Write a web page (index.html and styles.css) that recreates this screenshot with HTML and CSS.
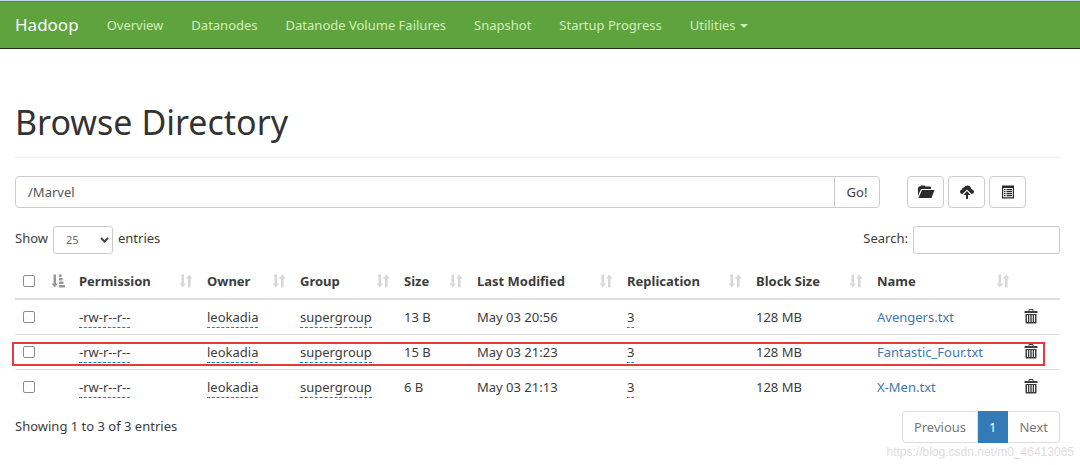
FILE: index.html
```html
<!DOCTYPE html>
<html lang="en">
<head>
<meta charset="utf-8">
<title>Browsing HDFS</title>
<link rel="stylesheet" href="styles.css">
</head>
<body>
<svg class="sprite" aria-hidden="true">
  <symbol id="sort" viewBox="0 0 14 14"><path d="M2.500 .5h2.500v9h2L3.750 13.500 .5 9.500h2zM9 13.500h2.500V4.500h2L10.250 .5 7 4.500h2z"/></symbol>
  <symbol id="sorted" viewBox="0 0 14 14"><path d="M2.500 .5h2.500v9h2L3.750 13.500 .5 9.500h2zM8 .5h2.500v2.500H8zM8 4h3.500v2.500H8zM8 7.500h4.500V10H8zM8 11h6v2.500H8z"/></symbol>
  <symbol id="trash" viewBox="0 0 14 16"><path fill-rule="evenodd" d="M4.500 2V1q0-1 1-1h3q1 0 1 1v1H13q.5 0 .5.500V4H.5V2.500Q.5 2 1 2zM5.500 2h3V1h-3zM1.500 5h11v8.500q0 1-1 1h-9q-1 0-1-1zM3 6v7h1V6zm2.300 0v7h1V6zm2.400 0v7h1V6zM10 6v7h1V6z"/></symbol>
</svg>
<nav class="navbar">
  <a class="brand" href="#">Hadoop</a>
  <a href="#">Overview</a>
  <a href="#">Datanodes</a>
  <a href="#">Datanode Volume Failures</a>
  <a href="#">Snapshot</a>
  <a href="#">Startup Progress</a>
  <a href="#">Utilities <span class="caret"></span></a>
</nav>
<main class="container">
  <header class="page-header"><h1>Browse Directory</h1></header>
  <div class="toolbar">
    <form class="path-group">
      <input type="text" class="path" aria-label="Directory" value="/Marvel">
      <button type="button" class="go">Go!</button>
    </form>
    <div class="actions">
      <button type="button" aria-label="Create directory"><svg width="18" height="14" viewBox="0 0 18 14"><path d="M1 11V2.500L2 1.500h1L4 .5h3.500l1 1H13q1 0 1 1V4H5L3.500 5z"/><path d="M5 5h12.500L14.500 13H1.500z"/></svg></button>
      <button type="button" aria-label="Upload files"><svg width="16" height="14" viewBox="0 0 16 14"><path d="M3.500 9Q1 9 1 6.800 1 5 3 4.500 3 2.500 5 2.500 6 .5 8.500.5q3.200 0 3.700 3.500Q15 4.500 15 6.700 15 9 12.500 9L8 4.500 3.500 9z"/><path d="M8 6l3.500 4H9v4H7v-4H4.500z"/></svg></button>
      <button type="button" aria-label="Cut and paste"><svg width="14" height="14" viewBox="0 0 14 14"><path fill-rule="evenodd" d="M1 .5h12v13H1zM2.200 3v9.300h9.600V3zM3 4h1.500v1.200H3zM5.500 4H11v1.200H5.500zM3 6h1.500v1.200H3zM5.500 6H11v1.200H5.500zM3 8h1.500v1.200H3zM5.500 8H11v1.200H5.500zM3 10h1.500v1.200H3zM5.500 10H11v1.200H5.500z"/></svg></button>
    </div>
  </div>
  <div class="controls">
    <div class="field"><label for="length">Show</label>
      <span class="select-wrap"><select id="length"><option>25</option></select><svg width="9" height="6" viewBox="0 0 9 6"><path d="M1 1l3.500 3.500L8 1"/></svg></span>
      <label for="length">entries</label></div>
    <div class="field"><label for="search">Search:</label><input type="search" id="search"></div>
  </div>
  <div class="listing">
    <table>
      <colgroup><col class="c-check"><col class="c-perm"><col class="c-owner"><col class="c-group"><col class="c-size"><col class="c-date"><col class="c-repl"><col class="c-block"><col class="c-name"><col class="c-del"></colgroup>
      <thead><tr>
        <th><div class="head"><input type="checkbox" aria-label="Select all"><svg class="sorted"><use href="#sorted"/></svg></div></th>
        <th><div class="head">Permission<svg><use href="#sort"/></svg></div></th>
        <th><div class="head">Owner<svg><use href="#sort"/></svg></div></th>
        <th><div class="head">Group<svg><use href="#sort"/></svg></div></th>
        <th><div class="head">Size<svg><use href="#sort"/></svg></div></th>
        <th><div class="head">Last Modified<svg><use href="#sort"/></svg></div></th>
        <th><div class="head">Replication<svg><use href="#sort"/></svg></div></th>
        <th><div class="head">Block Size<svg><use href="#sort"/></svg></div></th>
        <th><div class="head">Name<svg><use href="#sort"/></svg></div></th>
        <th></th>
      </tr></thead>
      <tbody>
        <tr><td><input type="checkbox" aria-label="Select Avengers.txt"></td><td><span class="editable">-rw-r--r--</span></td><td><span class="editable">leokadia</span></td><td><span class="editable">supergroup</span></td><td>13 B</td><td>May 03 20:56</td><td><span class="editable">3</span></td><td>128 MB</td><td><a href="#">Avengers.txt</a></td><td><button type="button" class="trash" aria-label="Delete Avengers.txt"><svg><use href="#trash"/></svg></button></td></tr>
        <tr><td><input type="checkbox" aria-label="Select Fantastic_Four.txt"></td><td><span class="editable">-rw-r--r--</span></td><td><span class="editable">leokadia</span></td><td><span class="editable">supergroup</span></td><td>15 B</td><td>May 03 21:23</td><td><span class="editable">3</span></td><td>128 MB</td><td><a href="#">Fantastic_Four.txt</a></td><td><button type="button" class="trash" aria-label="Delete Fantastic_Four.txt"><svg><use href="#trash"/></svg></button></td></tr>
        <tr><td><input type="checkbox" aria-label="Select X-Men.txt"></td><td><span class="editable">-rw-r--r--</span></td><td><span class="editable">leokadia</span></td><td><span class="editable">supergroup</span></td><td>6 B</td><td>May 03 21:13</td><td><span class="editable">3</span></td><td>128 MB</td><td><a href="#">X-Men.txt</a></td><td><button type="button" class="trash" aria-label="Delete X-Men.txt"><svg><use href="#trash"/></svg></button></td></tr>
      </tbody>
    </table>
    <div class="highlight"></div>
  </div>
  <footer class="table-footer">
    <p>Showing 1 to 3 of 3 entries</p>
    <div class="pagination"><a href="#">Previous</a><a href="#" class="active">1</a><a href="#">Next</a></div>
  </footer>
</main>
<div class="watermark">https://blog.csdn.net/m0_46413065</div>
</body>
</html>
```
FILE: styles.css
```css
* { box-sizing: border-box; }
body {
  margin: 0;
  background: #fff;
  color: #3c3c3c;
  font: 13px/20px "Noto Sans", "Open Sans", sans-serif;
}
a { color: #3e78b0; text-decoration: none; }
input, button, select { font: inherit; color: inherit; }
button { cursor: pointer; }
svg { fill: currentColor; flex: none; }
.sprite { display: none; }

.navbar {
  display: flex;
  align-items: center;
  height: 49px;
  border-top: 1px solid #c3dbe3;
  border-bottom: 1px solid #1f3015;
  background: linear-gradient(#5d7d63 1px, #5fa33e 1px);
}
.navbar a { padding: 0 14px; color: #d0f0b8; white-space: nowrap; }
.navbar .brand { padding-left: 15px; color: #fff; font-size: 17px; }
.caret {
  display: inline-block;
  margin-left: 1px;
  vertical-align: middle;
  border-top: 4px solid;
  border-left: 4px solid transparent;
  border-right: 4px solid transparent;
}

.container { padding: 53px 20px 0 15px; }
.page-header { padding-bottom: 14px; border-bottom: 1px solid #eee; }
h1 { margin: 0; color: #333; font-size: 34px; font-weight: 400; line-height: 41px; }

.toolbar { display: flex; gap: 27px; margin-top: 18px; padding-right: 34px; }
.path-group { display: flex; flex: 1; }
.path {
  flex: 1;
  min-width: 0;
  height: 32px;
  padding: 0 12px;
  border: 1px solid #ccc;
  border-radius: 4px 0 0 4px;
  color: #555;
}
.go {
  width: 46px;
  margin-left: -1px;
  padding: 0;
  border: 1px solid #ccc;
  border-radius: 0 4px 4px 0;
  background: #fff;
}
.actions { display: flex; gap: 4px; color: #2b2b2b; }
.actions button {
  display: grid;
  place-items: center;
  width: 37px;
  height: 32px;
  padding: 0;
  border: 1px solid #ccc;
  border-radius: 4px;
  background: #fff;
}

.controls { display: flex; justify-content: space-between; margin-top: 18px; }
.field { display: flex; gap: 5px; }
.field label { line-height: 24px; }
.select-wrap { display: grid; align-items: center; }
.select-wrap > * { grid-area: 1 / 1; }
.select-wrap svg { justify-self: end; margin-right: 4px; fill: none; stroke: #444; stroke-width: 2; pointer-events: none; }
.field select, .field input {
  height: 28px;
  border: 1px solid #ccc;
  border-radius: 3px;
  background: #fff;
  color: #666;
  font-size: 11px;
}
.field select { appearance: none; width: 60px; padding: 0 12px; }
.field input { width: 147px; padding: 0 10px; }

.listing { position: relative; margin-top: 10px; }
table { width: 100%; border-collapse: separate; border-spacing: 0; table-layout: fixed; }
.c-check { width: 56px; }
.c-perm { width: 128px; }
.c-owner { width: 93px; }
.c-group { width: 104px; }
.c-size { width: 73px; }
.c-date { width: 150px; }
.c-repl { width: 129px; }
.c-block { width: 121px; }
.c-name { width: 147px; }
.c-del { width: 44px; }
th, td { height: 35px; padding: 0 8px 1px; text-align: left; white-space: nowrap; }
th { height: 36px; padding: 0 6px 0 8px; border-bottom: 2px solid #ddd; }
td { border-bottom: 1px solid #ddd; }
tbody tr:last-child td { border-bottom-color: transparent; }
.head { display: flex; align-items: center; justify-content: space-between; }
.head svg { width: 14px; height: 14px; color: #d8d8d8; }
.head .sorted { color: #999; }
input[type="checkbox"] {
  display: block;
  appearance: none;
  width: 12px;
  height: 12px;
  margin: 0;
  border: 1px solid #8c8c8c;
  border-radius: 2px;
  background: #fff;
}
.editable { padding-bottom: 1px; border-bottom: 1px dashed #0088cc; }
.trash { display: block; padding: 0; margin: 0; border: 0; background: none; }
.trash svg { display: block; width: 14px; height: 16px; }
.highlight {
  position: absolute;
  top: 78px;
  left: -3px;
  right: 15px;
  height: 24px;
  border: 2px solid #e53b3b;
  pointer-events: none;
}

.table-footer { display: flex; justify-content: space-between; margin-top: 6px; }
.table-footer p { margin: 5px 0; }
.pagination { display: flex; }
.pagination a { padding: 5px 11px; border: 1px solid #ddd; border-left: 0; color: #777; }
.pagination a:first-child { border-left: 1px solid #ddd; border-radius: 4px 0 0 4px; }
.pagination a:last-child { border-radius: 0 4px 4px 0; }
.pagination .active { border-color: #337ab7; background: #337ab7; color: #fff; }
.watermark {
  position: absolute;
  right: 6px;
  bottom: 5px;
  color: #ddd;
  font: 12px/16px "Liberation Sans", Arial, sans-serif;
}
```
